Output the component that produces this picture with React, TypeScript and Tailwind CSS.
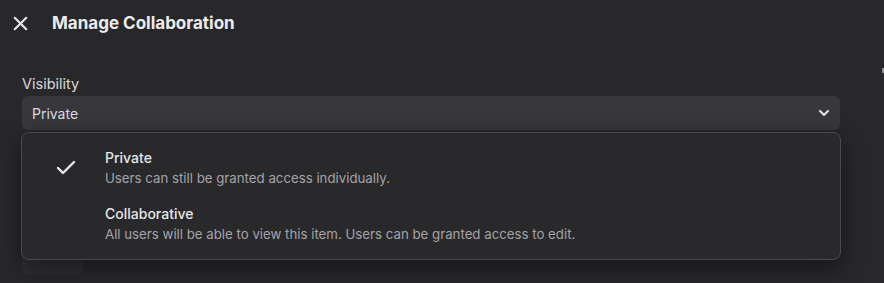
import React from "react";

export default function App() {
  return (
    <div
      className="relative w-[884px] h-[283px] overflow-hidden bg-[#28282b] text-[#e4e4e7]"
      style={{ fontFamily: "Inter, 'Noto Sans', sans-serif" }}
    >
      <div className="flex items-center h-[46px] pl-[9px]">
        <svg width="23" height="23" viewBox="0 0 24 24" fill="none" stroke="#e8e8ea" strokeWidth="2.2" strokeLinecap="round" strokeLinejoin="round">
          <path d="M18 6 6 18" />
          <path d="m6 6 12 12" />
        </svg>
        <div className="ml-[20px] text-[17px] font-bold text-[#ececee] leading-none">Manage Collaboration</div>
      </div>

      <div className="px-[22px] pr-[44px]">
        <div className="mt-[28px] text-[14.5px] leading-[20px] text-[#d8d8db]">Visibility</div>
        <div className="mt-[2px] h-[34px] rounded-[6px] bg-[#38373c] flex items-center justify-between pl-[10px] pr-[8px]">
          <span className="text-[14px] text-[#dcdcdf]">Private</span>
          <svg width="16" height="16" viewBox="0 0 24 24" fill="none" stroke="#ececee" strokeWidth="3" strokeLinecap="round" strokeLinejoin="round">
            <path d="m6 9 6 6 6-6" />
          </svg>
        </div>
        <div className="mt-[113px] h-[32px] w-[61px] rounded-[6px] bg-[#2f2f33]" />
      </div>

      <div className="absolute left-[21px] top-[132px] w-[820px] rounded-[8px] border border-[#4a4a4f] bg-[#29292c] py-[7px] shadow-[0_8px_24px_rgba(0,0,0,0.45)]">
        <div className="flex items-center py-[8px] pl-[32px]">
          <div className="w-[24px] flex justify-center">
            <svg width="24" height="24" viewBox="0 0 24 24" fill="none" stroke="#f0f0f2" strokeWidth="2.4" strokeLinecap="round" strokeLinejoin="round">
              <path d="M20 6 9 17l-5-5" />
            </svg>
          </div>
          <div className="ml-[27px]">
            <div className="text-[14px] leading-[20px] font-medium text-[#e6e6e8]">Private</div>
            <div className="text-[13.25px] leading-[20px] text-[#a4a4a8]">Users can still be granted access individually.</div>
          </div>
        </div>
        <div className="flex items-center py-[8px] pl-[32px]">
          <div className="w-[24px]" />
          <div className="ml-[27px]">
            <div className="text-[14px] leading-[20px] font-medium text-[#e6e6e8]">Collaborative</div>
            <div className="text-[13.25px] leading-[20px] text-[#a4a4a8]">All users will be able to view this item. Users can be granted access to edit.</div>
          </div>
        </div>
      </div>

      <div className="absolute left-[882px] top-[68px] w-[2px] h-[5px] bg-[#8a8a8e]" />
    </div>
  );
}
